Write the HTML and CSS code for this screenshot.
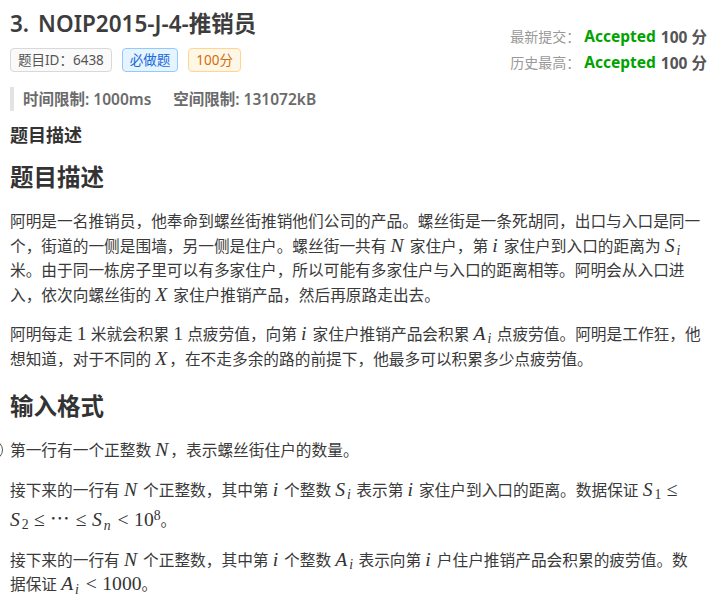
FILE: index.html
```html
<!DOCTYPE html>
<html lang="zh-CN">
<head>
  <meta charset="UTF-8" />
  <meta name="viewport" content="width=device-width, initial-scale=1.0"/>
  <title>NOIP2015-J-4-推销员</title>
  <link rel="stylesheet" href="styles.css">
</head>
<body>

<span class="side-handle"></span>

<div class="page">
  <header class="head">
    <div class="head-main">
      <h1 class="title"><span class="title-no">3.</span>NOIP2015-J-4-推销员</h1>
      <div class="tags">
        <span class="tag tag-id">题目ID：6438</span>
        <span class="tag tag-must">必做题</span>
        <span class="tag tag-score">100分</span>
      </div>
      <div class="limits">
        <span class="limit">时间限制: 1000ms</span>
        <span class="limit">空间限制: 131072kB</span>
      </div>
    </div>

    <div class="status">
      <div class="status-row">
        <span class="status-label">最新提交：</span>
        <span class="ac">Accepted</span>
        <span class="score">100 分</span>
      </div>
      <div class="status-row">
        <span class="status-label">历史最高：</span>
        <span class="ac">Accepted</span>
        <span class="score">100 分</span>
      </div>
    </div>
  </header>

  <h3 class="section-label">题目描述</h3>

  <div class="markdown">
    <h2>题目描述</h2>
    <p>阿明是一名推销员，他奉命到螺丝街推销他们公司的产品。螺丝街是一条死胡同，出口与入口是同一<br>个，街道的一侧是围墙，另一侧是住户。螺丝街一共有 <span class="m"><i>N</i></span> 家住户，第 <span class="m"><i>i</i></span> 家住户到入口的距离为 <span class="m"><i>S</i><sub><i>i</i></sub></span><br>米。由于同一栋房子里可以有多家住户，所以可能有多家住户与入口的距离相等。阿明会从入口进<br>入，依次向螺丝街的 <span class="m"><i>X</i></span> 家住户推销产品，然后再原路走出去。</p>
    <p>阿明每走 <span class="m">1</span> 米就会积累 <span class="m">1</span> 点疲劳值，向第 <span class="m"><i>i</i></span> 家住户推销产品会积累 <span class="m"><i>A</i><sub><i>i</i></sub></span> 点疲劳值。阿明是工作狂，他<br>想知道，对于不同的 <span class="m"><i>X</i></span>，在不走多余的路的前提下，他最多可以积累多少点疲劳值。</p>

    <h2>输入格式</h2>
    <p>第一行有一个正整数 <span class="m"><i>N</i></span>，表示螺丝街住户的数量。</p>
    <p>接下来的一行有 <span class="m"><i>N</i></span> 个正整数，其中第 <span class="m"><i>i</i></span> 个整数 <span class="m"><i>S</i><sub><i>i</i></sub></span> 表示第 <span class="m"><i>i</i></span> 家住户到入口的距离。数据保证 <span class="m"><i>S</i><sub>1</sub><span class="rel">≤</span></span><br><span class="m"><i>S</i><sub>2</sub><span class="rel">≤</span>⋯<span class="rel">≤</span><i>S</i><sub><i>n</i></sub><span class="rel">&lt;</span>10<sup>8</sup></span>。</p>
    <p>接下来的一行有 <span class="m"><i>N</i></span> 个正整数，其中第 <span class="m"><i>i</i></span> 个整数 <span class="m"><i>A</i><sub><i>i</i></sub></span> 表示向第 <span class="m"><i>i</i></span> 户住户推销产品会积累的疲劳值。数<br>据保证 <span class="m"><i>A</i><sub><i>i</i></sub><span class="rel">&lt;</span>1000</span>。</p>
  </div>
</div>

</body>
</html>
```

FILE: styles.css
```css
body {
  margin: 0;
  font-family: "Noto Sans", "Noto Sans CJK SC", sans-serif;
  color: #333;
  background: #fff;
}
.page {
  padding: 8px 10px 0;
}
.side-handle {
  position: absolute;
  left: -17px;
  top: 440px;
  width: 18px;
  height: 18px;
  border: 1.5px solid #555;
  border-radius: 50%;
}

/* header */
.head {
  display: flex;
  justify-content: space-between;
}
.title {
  margin: 0;
  font-size: 22.5px;
  line-height: 32px;
  font-weight: 600;
  color: #3d3d3d;
}
.title-no {
  margin-right: 9px;
}
.tags {
  display: flex;
  gap: 10px;
  margin-top: 8px;
}
.tag {
  height: 22px;
  line-height: 22px;
  padding: 0 7px;
  border: 1px solid #d9d9d9;
  border-radius: 4px;
  font-size: 13.5px;
  background: #fafafa;
  color: #555;
}
.tag-must {
  background: #e6f4ff;
  border-color: #91caff;
  color: #1668dc;
}
.tag-score {
  background: #fff7e6;
  border-color: #ffd591;
  color: #d46b08;
}
.limits {
  display: flex;
  gap: 22px;
  margin-top: 15px;
  padding-left: 9px;
  border-left: 4px solid #e3e3e3;
  height: 24px;
  line-height: 24px;
  font-size: 15.5px;
  font-weight: 600;
  color: #6b6b6b;
}
.status {
  margin-top: 15px;
  padding-right: 1px;
}
.status-row {
  display: flex;
  align-items: center;
  height: 26px;
}
.status-label {
  font-size: 14px;
  color: #999;
  margin-right: 4px;
  margin-left: 4px;
}
.ac {
  font-size: 15.5px;
  font-weight: 700;
  color: #00a300;
  margin-right: 5px;
}
.score {
  font-size: 15.5px;
  font-weight: 700;
  color: #555;
}

/* content */
.section-label {
  margin: 12px 0 0;
  font-size: 18px;
  line-height: 24px;
  font-weight: 700;
  color: #333;
}
.markdown h2 {
  margin: 19px 0 16px;
  font-size: 23.5px;
  line-height: 32px;
  font-weight: 700;
  color: #333;
}
.markdown h2:first-child {
  margin-top: 14px;
}
.markdown p {
  margin: 0 0 15px;
  font-size: 15.7px;
  line-height: 24.5px;
  color: #3a3a3a;
}
.m {
  font-family: "Liberation Serif", "DejaVu Serif", serif;
  font-size: 1.25em;
  line-height: 1;
  white-space: nowrap;
  color: #333;
}
.m i {
  margin-right: 0.1em;
}
.m sub, .m sup {
  font-size: 0.7em;
  line-height: 0;
}
.m sub {
  vertical-align: -0.25em;
}
.m sup {
  vertical-align: 0.45em;
  line-height: 2;
}
.rel {
  margin: 0 0.28em;
}
```
